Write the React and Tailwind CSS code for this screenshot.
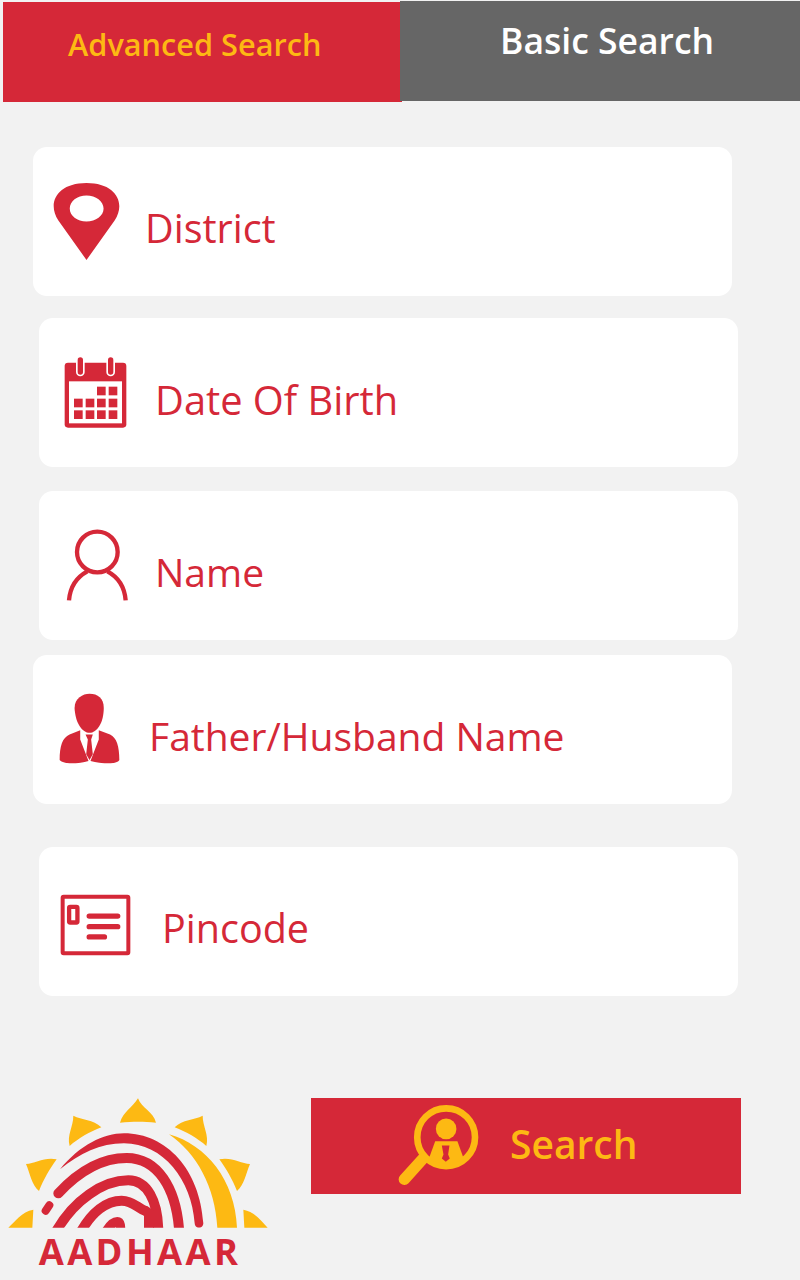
const red = '#d52838';

function PinIcon() {
  return (
    <svg viewBox="70 38 200 230" className="w-[67px] h-[77px] shrink-0">
      <path
        fillRule="evenodd"
        fill={red}
        d="M170 268 L86 150 C52 100 80 38 170 38 C260 38 288 100 254 150 Z M170 75 C142 75 120 92 120 114 C120 136 142 153 170 153 C198 153 221 136 221 114 C221 92 198 75 170 75 Z"
      />
    </svg>
  );
}

function CalendarIcon() {
  const cells = [
    [202, 650], [237, 650],
    [133, 686], [168, 686], [202, 686], [237, 686],
    [133, 721], [168, 721], [202, 721], [237, 721],
  ];
  return (
    <svg viewBox="100 555 195 225" className="w-[65px] h-[75px] shrink-0">
      <rect x="105" y="578" width="185" height="195" rx="10" fill={red} />
      <rect x="118" y="634" width="159" height="126" fill="#fff" />
      {[152, 243].map((x) => (
        <rect key={x} x={x - 13} y="559" width="26" height="60" rx="13" fill="#fff" />
      ))}
      {[152, 243].map((x) => (
        <rect key={x} x={x - 8} y="562" width="16" height="52" rx="8" fill={red} />
      ))}
      {cells.map(([x, y]) => (
        <rect key={`${x}-${y}`} x={x} y={y} width="26" height="26" fill={red} />
      ))}
    </svg>
  );
}

function PersonIcon() {
  return (
    <svg viewBox="75 25 195 225" className="w-[65px] h-[75px] shrink-0" fill="none" stroke={red} strokeWidth="13">
      <circle cx="172" cy="97" r="61" />
      <path d="M87 242 C90 205 105 175 142 155" />
      <path d="M257 242 C254 205 240 175 202 155" />
    </svg>
  );
}

function SuitIcon() {
  return (
    <svg viewBox="55 520 190 220" className="w-[63px] h-[73px] shrink-0" fill={red}>
      <path d="M105 565 C105 535 130 522 150 522 C175 522 193 535 193 565 C193 610 172 640 150 640 C128 640 107 610 105 565 Z" />
      <path d="M122 632 L122 660 L147 725 C115 735 70 735 60 722 C60 680 68 655 90 645 Z" />
      <path d="M178 632 L178 660 L153 725 C190 735 235 735 240 722 C240 680 232 655 212 645 Z" />
      <path d="M138 645 L160 645 L155 660 L160 705 L150 722 L140 705 L145 660 Z" />
    </svg>
  );
}

function CardIcon() {
  return (
    <svg viewBox="28 23 220 192" className="w-[73px] h-[64px] shrink-0" fill="none" stroke={red}>
      <rect x="39" y="34" width="198" height="170" strokeWidth="12" rx="3" />
      <rect x="58.5" y="64.5" width="25" height="47" strokeWidth="13" rx="3" />
      <path d="M119 92 H205 M119 124 H205 M119 155 H165" strokeWidth="16" strokeLinecap="round" />
    </svg>
  );
}

function SearchIcon() {
  return (
    <svg viewBox="290 40 250 250" className="w-[83px] h-[83px] shrink-0">
      <circle cx="438" cy="143" r="87" fill="none" stroke="#fdb913" strokeWidth="20" />
      <path d="M368 208 L312 270" stroke="#fdb913" strokeWidth="34" strokeLinecap="round" />
      <circle cx="438" cy="118" r="31" fill="#fdb913" />
      <path d="M405 155 H472 L490 205 C475 228 400 228 387 205 Z" fill="#fdb913" />
      <path d="M425 168 H448 L444 195 L449 207 L437 217 L425 207 L430 195 Z" fill={red} />
    </svg>
  );
}

function AadhaarLogo() {
  return (
    <svg viewBox="24 54 780 540" className="w-[260px] h-[180px] shrink-0">
      <defs>
        <clipPath id="logo-clip">
          <rect x="0" y="0" width="900" height="443" />
        </clipPath>
      </defs>
      <g fill="#fdb913">
        <path d="M360 128 C370 95 395 85 414 55 C425 85 460 95 468 128 C430 124 400 124 360 128 Z" />
        <path d="M220 107 C245 120 280 118 304 142 C270 155 235 175 209 198 C200 165 220 140 220 107 Z" />
        <path d="M608 107 C583 120 548 118 524 142 C558 155 593 175 619 198 C628 165 608 140 608 107 Z" />
        <path d="M78 252 C105 250 135 230 170 238 C150 265 130 300 117 333 C95 315 90 280 78 252 Z" />
        <path d="M750 252 C723 250 693 230 658 238 C678 265 698 300 711 333 C733 315 738 280 750 252 Z" />
        <path d="M25 443 C45 425 65 395 100 389 L97 443 Z" />
        <path d="M730 389 C765 395 785 425 803 443 L733 443 Z" />
        <path d="M507 163 C620 195 705 300 711 443 L652 443 C645 320 590 220 507 163 Z" />
      </g>
      <g clipPath="url(#logo-clip)">
        <path fill={red} d="M180 268 C240 195 310 160 372 160 C500 160 600 270 610 430 A13 13 0 0 1 584 430 C575 300 490 190 372 190 C300 190 240 220 180 268 Z" />
        <g fill="none" stroke={red} strokeLinecap="round">
          <path strokeWidth="30" d="M175 340 C240 270 310 234 380 234 C470 234 530 320 538 460" />
          <path strokeWidth="30" d="M165 460 C220 360 310 301 385 301 C440 301 475 360 475 460" />
          <path strokeWidth="30" d="M240 460 C275 395 320 362 365 362 C400 362 412 385 435 392 L447 400 L447 460" />
          <path strokeWidth="28" d="M315 460 C330 432 345 425 352 425 C362 425 362 440 362 460" />
          <path strokeWidth="24" d="M137 392 L148 376" />
        </g>
      </g>
      <text x="116" y="555" textLength="598" className="fill-[#d52838] font-['Open_Sans'] font-bold text-[109px]">
        AADHAAR
      </text>
    </svg>
  );
}

function Field({ className, gap, icon, label, textTop = 'mt-[15px]', size = 'text-[39.5px]' }) {
  return (
    <div className={`w-[699px] h-[149px] flex items-center rounded-[14px] bg-white ${className}`}>
      {icon}
      <span className={`font-['Open_Sans'] leading-none text-[#d52838] ${size} ${gap} ${textTop}`}>{label}</span>
    </div>
  );
}

export default function App() {
  return (
    <div className="w-[800px] h-[1280px] overflow-hidden bg-[#f2f2f2] font-['Open_Sans',sans-serif]">
      {/* pestañas */}
      <div className="flex items-start h-[102px]">
        <div className="ml-[3px] mt-[2px] w-[399px] h-[100px] shrink-0 bg-[#d52838] pl-[65px] pt-[24px] text-[30.7px] leading-[36px] font-semibold text-[#fdb913] whitespace-nowrap">
          Advanced Search
        </div>
        <div className="-ml-[2px] mt-[1px] w-[400px] h-[100px] shrink-0 bg-[#666666] pl-[100px] pt-[16px] text-[35.5px] leading-[46px] font-semibold text-white whitespace-nowrap">
          Basic Search
        </div>
      </div>

      <Field className="mt-[45px] ml-[33px] pl-[20px]" gap="ml-[25px]" icon={<PinIcon />} label="District" />
      <Field className="mt-[22px] ml-[39px] pl-[24px]" gap="ml-[27px]" icon={<CalendarIcon />} size="text-[39.8px]" label="Date Of Birth" />
      <Field className="mt-[24px] ml-[39px] pl-[26px]" gap="ml-[25px]" icon={<PersonIcon />} size="text-[39px]" textTop="mt-[11px]" label="Name" />
      <Field className="mt-[15px] ml-[33px] pl-[25px]" gap="ml-[28px]" icon={<SuitIcon />} size="text-[39px]" textTop="mt-[11px]" label="Father/Husband Name" />
      <Field className="mt-[43px] ml-[39px] pl-[20px]" gap="ml-[30px]" icon={<div className="mt-[7px]"><CardIcon /></div>} label="Pincode" />

      <div className="flex items-start mt-[102px] ml-[8px]">
        <AadhaarLogo />
        <button className="ml-[43px] w-[430px] h-[96px] flex items-start bg-[#d52838] pl-[86px] pt-[5px]">
          <SearchIcon />
          <span className="ml-[30px] mt-[16px] font-['Open_Sans'] text-[39px] leading-[50px] font-semibold text-[#fdb913]">
            Search
          </span>
        </button>
      </div>
    </div>
  );
}
